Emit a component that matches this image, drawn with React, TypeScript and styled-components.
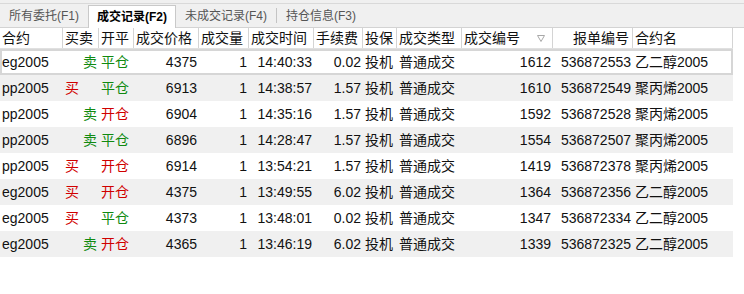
import React from "react";
import styled, { createGlobalStyle } from "styled-components";

const GlobalStyle = createGlobalStyle`
  html, body {
    margin: 0;
    padding: 0;
    background: #ffffff;
  }
  body {
    font-family: "Liberation Sans", "Noto Sans CJK SC", Arial, sans-serif;
    color: #111;
  }
`;

const COLS = "63px 36px 35px 65px 50px 65px 49px 34px 65px 91px 80px 100px";

const Page = styled.div`
  width: 744px;
  height: 294px;
  background: #ffffff;
  overflow: hidden;
`;

const TopGap = styled.div`
  height: 3px;
  background: #f0f0f0;
`;

const TabStrip = styled.div`
  display: flex;
  align-items: stretch;
  height: 23px;
  background: #f0f0f0;
  border-top: 1px solid #d9d9d9;
  border-bottom: 1px solid #d3d3d3;
`;

const Tab = styled.div<{ $active?: boolean }>`
  position: relative;
  display: flex;
  align-items: center;
  padding: 0 8px;
  font-size: 12px;
  line-height: 14px;
  white-space: nowrap;
  color: ${(p) => (p.$active ? "#000" : "#555")};
  font-weight: ${(p) => (p.$active ? 700 : 400)};
  background: ${(p) => (p.$active ? "#ffffff" : "transparent")};
  border-left: 1px solid ${(p) => (p.$active ? "#c9c9c9" : "transparent")};
  border-right: 1px solid ${(p) => (p.$active ? "#c9c9c9" : "transparent")};
  border-top: 1px solid ${(p) => (p.$active ? "#c9c9c9" : "transparent")};
  margin-top: ${(p) => (p.$active ? "1px" : "0")};
  margin-bottom: ${(p) => (p.$active ? "-1px" : "0")};
  z-index: ${(p) => (p.$active ? 1 : 0)};
`;

const TabSep = styled.div`
  width: 1px;
  align-self: center;
  height: 15px;
  background: #c4c4c4;
`;

const Table = styled.div`
  width: 733px;
`;

const HeaderRow = styled.div`
  display: grid;
  grid-template-columns: ${COLS};
  height: 20px;
  background: #ffffff;
  border-bottom: 1px solid #e0e0e0;
`;

const HeadCell = styled.div<{ $align?: "left" | "right" }>`
  box-sizing: border-box;
  display: flex;
  align-items: center;
  justify-content: ${(p) => (p.$align === "right" ? "flex-end" : "flex-start")};
  padding: 0 3px 0 2px;
  font-size: 14px;
  line-height: 16px;
  white-space: nowrap;
  color: #111;
  border-right: 1px solid #d4d4d4;
  overflow: hidden;
`;

const SortHeadCell = styled(HeadCell)`
  justify-content: space-between;
  padding-right: 7px;
`;

const Row = styled.div<{ $striped?: boolean; $selected?: boolean }>`
  display: grid;
  grid-template-columns: ${COLS};
  height: 26px;
  background: ${(p) => (p.$striped ? "#f0f0f0" : "#ffffff")};
  box-shadow: ${(p) => (p.$selected ? "inset 0 0 0 2px #d6d6d6" : "none")};
`;

const Cell = styled.div<{ $align?: "left" | "right"; $color?: string }>`
  box-sizing: border-box;
  display: flex;
  align-items: center;
  justify-content: ${(p) => (p.$align === "right" ? "flex-end" : "flex-start")};
  padding: 0 2px;
  font-size: 14px;
  line-height: 16px;
  white-space: nowrap;
  color: ${(p) => p.$color || "#111"};
  overflow: visible;
`;

const RED = "#d00000";
const GREEN = "#108a10";

type Trade = {
  code: string;
  side: "买" | "卖";
  open: "开仓" | "平仓";
  price: string;
  qty: string;
  time: string;
  fee: string;
  hedge: string;
  type: string;
  tradeNo: string;
  orderNo: string;
  name: string;
};

const trades: Trade[] = [
  { code: "eg2005", side: "卖", open: "平仓", price: "4375", qty: "1", time: "14:40:33", fee: "0.02", hedge: "投机", type: "普通成交", tradeNo: "1612", orderNo: "536872553", name: "乙二醇2005" },
  { code: "pp2005", side: "买", open: "平仓", price: "6913", qty: "1", time: "14:38:57", fee: "1.57", hedge: "投机", type: "普通成交", tradeNo: "1610", orderNo: "536872549", name: "聚丙烯2005" },
  { code: "pp2005", side: "卖", open: "开仓", price: "6904", qty: "1", time: "14:35:16", fee: "1.57", hedge: "投机", type: "普通成交", tradeNo: "1592", orderNo: "536872528", name: "聚丙烯2005" },
  { code: "pp2005", side: "卖", open: "平仓", price: "6896", qty: "1", time: "14:28:47", fee: "1.57", hedge: "投机", type: "普通成交", tradeNo: "1554", orderNo: "536872507", name: "聚丙烯2005" },
  { code: "pp2005", side: "买", open: "开仓", price: "6914", qty: "1", time: "13:54:21", fee: "1.57", hedge: "投机", type: "普通成交", tradeNo: "1419", orderNo: "536872378", name: "聚丙烯2005" },
  { code: "eg2005", side: "买", open: "开仓", price: "4375", qty: "1", time: "13:49:55", fee: "6.02", hedge: "投机", type: "普通成交", tradeNo: "1364", orderNo: "536872356", name: "乙二醇2005" },
  { code: "eg2005", side: "买", open: "平仓", price: "4373", qty: "1", time: "13:48:01", fee: "0.02", hedge: "投机", type: "普通成交", tradeNo: "1347", orderNo: "536872334", name: "乙二醇2005" },
  { code: "eg2005", side: "卖", open: "开仓", price: "4365", qty: "1", time: "13:46:19", fee: "6.02", hedge: "投机", type: "普通成交", tradeNo: "1339", orderNo: "536872325", name: "乙二醇2005" },
];

const SortArrow = () => (
  <svg width="8" height="7" viewBox="0 0 8 7" aria-hidden="true">
    <polygon points="0.5,0.5 7.5,0.5 4,6.5" fill="none" stroke="#a8a8a8" strokeWidth="1" />
  </svg>
);

export default function App() {
  return (
    <Page>
      <GlobalStyle />
      <TopGap />
      <TabStrip>
        <Tab>所有委托(F1)</Tab>
        <Tab $active>成交记录(F2)</Tab>
        <Tab>未成交记录(F4)</Tab>
        <TabSep />
        <Tab>持仓信息(F3)</Tab>
      </TabStrip>
      <Table>
        <HeaderRow>
          <HeadCell>合约</HeadCell>
          <HeadCell>买卖</HeadCell>
          <HeadCell>开平</HeadCell>
          <HeadCell>成交价格</HeadCell>
          <HeadCell>成交量</HeadCell>
          <HeadCell>成交时间</HeadCell>
          <HeadCell>手续费</HeadCell>
          <HeadCell>投保</HeadCell>
          <HeadCell>成交类型</HeadCell>
          <SortHeadCell>
            <span>成交编号</span>
            <SortArrow />
          </SortHeadCell>
          <HeadCell $align="right">报单编号</HeadCell>
          <HeadCell>合约名</HeadCell>
        </HeaderRow>
        {trades.map((t, i) => (
          <Row key={t.tradeNo} $striped={i % 2 === 1} $selected={i === 0}>
            <Cell>{t.code}</Cell>
            <Cell
              $align={t.side === "卖" ? "right" : "left"}
              $color={t.side === "买" ? RED : GREEN}
            >
              {t.side}
            </Cell>
            <Cell $color={t.open === "开仓" ? RED : GREEN}>{t.open}</Cell>
            <Cell $align="right">{t.price}</Cell>
            <Cell $align="right">{t.qty}</Cell>
            <Cell $align="right">{t.time}</Cell>
            <Cell $align="right">{t.fee}</Cell>
            <Cell>{t.hedge}</Cell>
            <Cell>{t.type}</Cell>
            <Cell $align="right">{t.tradeNo}</Cell>
            <Cell $align="right">{t.orderNo}</Cell>
            <Cell>{t.name}</Cell>
          </Row>
        ))}
      </Table>
    </Page>
  );
}
